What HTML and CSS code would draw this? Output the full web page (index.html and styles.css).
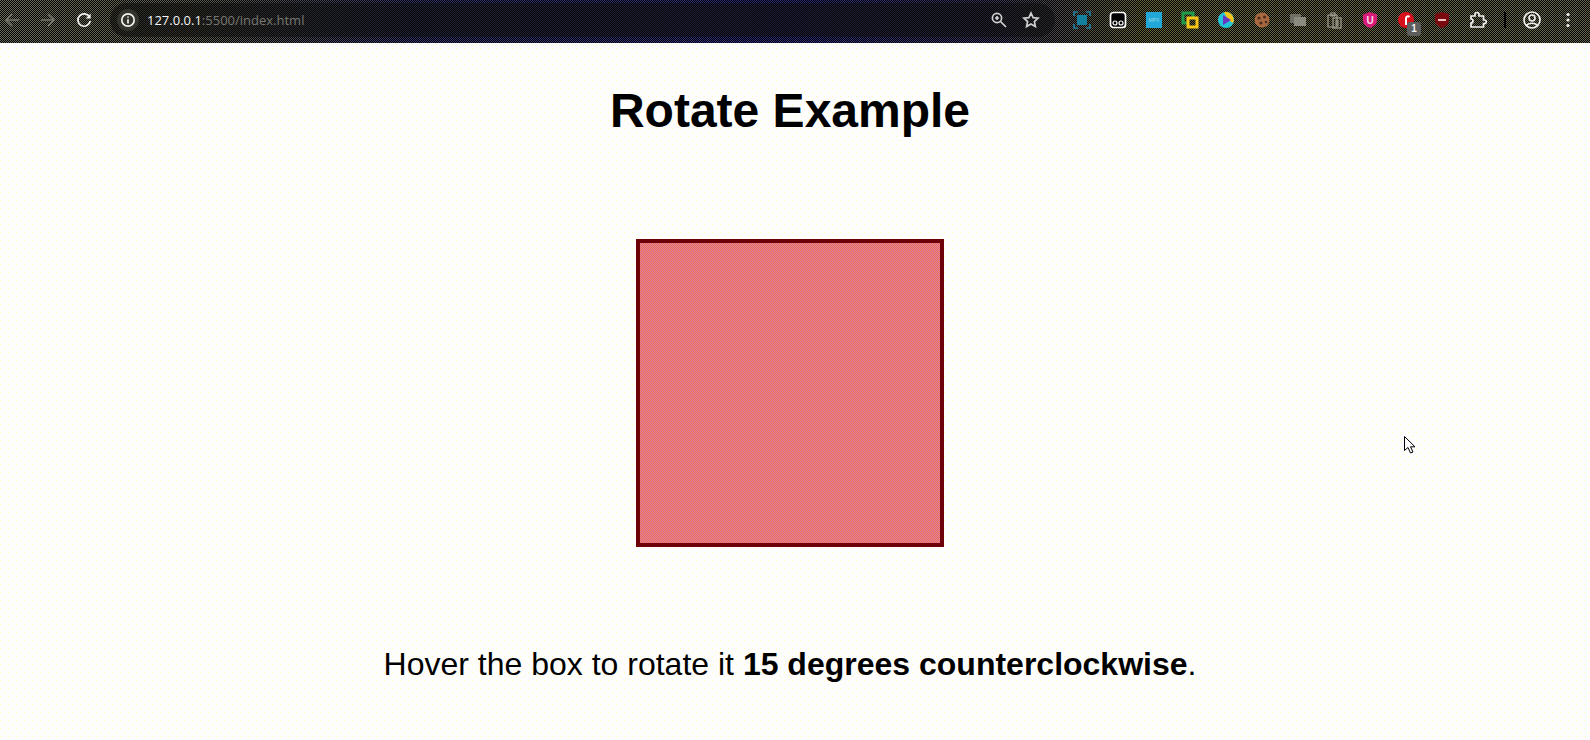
FILE: index.html
```html
<!DOCTYPE html>
<html lang="en">
<head>
	<meta charset="UTF-8">
	<title>Rotate Example</title>
	<link rel="stylesheet" href="styles.css">
</head>
<body>
	<div class="toolbar">
		<div class="nav">
			<span class="cell dim"><svg width="18" height="18" viewBox="0 0 18 18"><path d="M16 9H3M9 3L3 9l6 6"/></svg></span>
			<span class="cell dim"><svg width="18" height="18" viewBox="0 0 18 18"><path d="M2 9h13M9 3l6 6-6 6"/></svg></span>
			<span class="cell"><svg width="18" height="18" viewBox="0 0 18 18"><path d="M14.6 6.2A6.2 6.2 0 1 0 15.2 10"/><path class="solid" d="M15.6 2.4v5h-5z"/></svg></span>
		</div>
		<div class="omnibox">
			<span class="info"><svg width="16" height="16" viewBox="0 0 16 16"><circle cx="8" cy="8" r="6.2"/><path d="M8 7.2v4.2M8 4.4v1.4"/></svg></span>
			<span class="url"><span class="host">127.0.0.1</span>:5500/index.html</span>
			<span class="cell omni-icon"><svg width="18" height="18" viewBox="0 0 18 18"><circle cx="7" cy="7" r="4.6"/><path d="M10.5 10.5l5.5 5.5M5 7h4M7 5v4"/></svg></span>
			<span class="cell omni-icon"><svg width="18" height="18" viewBox="0 0 18 18"><path d="M9 2l2.1 4.6 5 .6-3.7 3.4 1 5L9 13.1l-4.4 2.5 1-5L1.900 7.200l5-.6z"/></svg></span>
		</div>
		<div class="extensions">
			<span class="cell"><svg width="18" height="18" viewBox="0 0 18 18"><path class="teal" d="M1 5V1h4M13 1h4v4M17 13v4h-4M5 17H1v-4"/><rect class="teal-fill" x="4" y="4" width="10" height="10"/></svg></span>
			<span class="cell"><svg width="18" height="18" viewBox="0 0 18 18"><rect class="ghost" x="1.500" y="1.500" width="15" height="15" rx="3"/><circle class="eye" cx="6" cy="12" r="2"/><circle class="eye" cx="12" cy="12" r="2"/></svg></span>
			<span class="cell"><span class="mpx">MPX</span></span>
			<span class="cell"><svg width="18" height="18" viewBox="0 0 18 18"><path class="green" d="M7 12H2V2h10v4"/><path class="yellow" d="M7 7h9v9H7z"/></svg></span>
			<span class="cell"><svg width="18" height="18" viewBox="0 0 18 18"><circle fill="#22c5d8" cx="9" cy="9" r="8"/><path fill="#f5c518" d="M7 1a8 8 0 0 1 9 11l-5-3z"/><path fill="#6a35c0" d="M6 4l8 5-8 5z"/></svg></span>
			<span class="cell"><svg width="18" height="18" viewBox="0 0 18 18"><circle fill="#a8683f" cx="9" cy="9" r="7.500"/><circle fill="#4a2a22" cx="6" cy="7" r="1.600"/><circle fill="#4a2a22" cx="11.500" cy="6" r="1.500"/><circle fill="#4a2a22" cx="8" cy="12" r="1.600"/><circle fill="#4a2a22" cx="13" cy="11" r="1.300"/></svg></span>
			<span class="cell"><svg width="18" height="18" viewBox="0 0 18 18"><rect fill="#6f6f66" x="1" y="3" width="11" height="9"/><rect fill="#8b8b80" x="5" y="6" width="12" height="9"/></svg></span>
			<span class="cell"><svg width="18" height="18" viewBox="0 0 18 18"><path class="muted" d="M3 4h9v12H3zM6 2h4v3H6z"/><rect class="muted" x="8" y="7" width="8" height="10"/><path class="muted" d="M10 10h4M10 12h4M10 14h4"/></svg></span>
			<span class="cell"><svg width="18" height="18" viewBox="0 0 18 18"><path fill="#d81b78" d="M9 1l7 2.500V9c0 4-3 6.500-7 8-4-1.500-7-4-7-8V3.500z"/><text class="shield-u" x="9" y="12.500">U</text></svg></span>
			<span class="cell"><svg width="18" height="18" viewBox="0 0 18 18"><circle fill="#d8101c" cx="9" cy="9" r="8"/><path fill="#fff" d="M8 14V7a3 3 0 0 1 5-2l-1 2a1 1 0 0 0-2 1v6z"/></svg><span class="badge">1</span></span>
			<span class="cell"><svg width="18" height="18" viewBox="0 0 18 18"><path fill="#7a0a10" d="M9 1l7 2v6c0 4-3 6.500-7 8-4-1.500-7-4-7-8V3z"/><rect fill="#f0c0c0" x="5" y="8" width="8" height="2"/></svg></span>
			<span class="cell"><svg width="18" height="18" viewBox="0 0 18 18"><path d="M2 5h4V3.500a2 2 0 0 1 4 0V5h4.500v4h1a1.800 1.800 0 0 1 0 3.600h-1V16H2v-4a2 2 0 0 0 0-4z"/></svg></span>
			<span class="divider"></span>
			<span class="cell"><svg width="20" height="20" viewBox="0 0 20 20"><circle cx="10" cy="10" r="8"/><circle cx="10" cy="8" r="3"/><path d="M4.500 15.500c2-3 9-3 11 0"/></svg></span>
			<span class="cell"><svg width="18" height="18" viewBox="0 0 18 18"><circle class="solid" cx="9" cy="3.500" r="1.600"/><circle class="solid" cx="9" cy="9" r="1.600"/><circle class="solid" cx="9" cy="14.500" r="1.600"/></svg></span>
		</div>
	</div>

	<div class="page">
		<h1>Rotate Example</h1>
		<div class="box"></div>
		<p>Hover the box to rotate it <b>15 degrees counterclockwise</b>.</p>
	</div>

	<svg class="pointer" width="14" height="20" viewBox="0 0 14 20"><path d="M1.500 1.500v14l3.500-3 2.500 5.500 2.500-1-2.500-5.200h4.500z"/></svg>
</body>
</html>
```

FILE: styles.css
```css
* {
	margin: 0;
	padding: 0;
	box-sizing: border-box;
}
html, body {
	height: 100%;
	overflow: hidden;
}
body {
	font-family: "Liberation Sans", Arial, sans-serif;
	color: #000;
	background:
		conic-gradient(at 1px 1px, transparent 75%, #ffffa8 0) 0 0/8px 8px,
		conic-gradient(at 1px 1px, transparent 75%, #ffffa8 0) 4px 4px/8px 8px,
		#fdfdfd;
}

/* browser bar, the source is a dithered gif */
.toolbar {
	display: flex;
	align-items: center;
	height: 43px;
	padding: 0 10px 3px 0;
	background:
		conic-gradient(#000 25%, transparent 0 50%, #000 0 75%, transparent 0) 0 0/2px 2px,
		linear-gradient(90deg, #6a6a58 0, #5c5c48 12%, #343468 26%, #2c2c78 50%, #383458 62%, #64643a 72%, #66664e 100%);
}
.nav {
	display: flex;
	gap: 12px;
}
.cell {
	position: relative;
	display: flex;
	align-items: center;
	justify-content: center;
	width: 24px;
	height: 24px;
	flex: none;
}
.cell svg, .info svg {
	fill: none;
	stroke: #f1f1f1;
	stroke-width: 1.700;
}
.cell .solid {
	fill: #f1f1f1;
	stroke: none;
}
.cell svg [fill] {
	stroke: none;
}
.dim svg {
	stroke: #77776a;
}
.omnibox {
	flex: 1;
	display: flex;
	align-items: center;
	height: 34px;
	margin: 0 15px 0 14px;
	padding: 0 4px 0 7px;
	border-radius: 17px;
	background: rgba(16, 16, 18, 0.62);
}
.info {
	display: flex;
	align-items: center;
	justify-content: center;
	width: 22px;
	height: 22px;
	border-radius: 50%;
	background: #34342e;
}
.url {
	flex: 1;
	margin-left: 8px;
	font: 13px "Open Sans", "Noto Sans", sans-serif;
	color: #77776f;
}
.host {
	color: #f4f4f4;
}
.omni-icon {
	margin-right: 8px;
}
.omni-icon svg {
	stroke: #d0d0d0;
}
.extensions {
	display: flex;
	align-items: center;
	gap: 12px;
}
.teal {
	stroke: #1c7d9a;
}
.teal-fill {
	fill: #12809c;
	stroke: none;
}
.ghost {
	fill: #000;
	stroke: #fff;
}
.eye {
	fill: #000;
	stroke: #fff;
	stroke-width: 1.200;
}
.mpx {
	width: 16px;
	height: 16px;
	font-size: 5px;
	line-height: 16px;
	text-align: center;
	color: #9ad8e8;
	background: #1fa8d8;
}
.green {
	stroke: #1f9a4a;
	stroke-width: 3;
}
.yellow {
	stroke: #f5c518;
	stroke-width: 3;
}
.cell .muted {
	stroke: #a0a094;
	stroke-width: 1.200;
}
.shield-u {
	font-size: 10px;
	font-weight: bold;
	text-anchor: middle;
	fill: #f8d8e8;
	stroke: none;
}
.badge {
	position: absolute;
	right: -3px;
	bottom: -4px;
	width: 14px;
	height: 14px;
	border-radius: 3px;
	font-size: 10px;
	font-weight: bold;
	line-height: 14px;
	text-align: center;
	color: #eee;
	background: #5d5d5d;
}
.divider {
	width: 2px;
	height: 16px;
	margin: 0 2px;
	background: #000;
}

/* page */
.page {
	display: flex;
	flex-direction: column;
	align-items: center;
	width: 1580px;
	padding-top: 40px;
}
h1 {
	font-size: 48px;
	line-height: 55px;
}
.box {
	width: 308px;
	height: 308px;
	margin: 101px 0 99px;
	border: 4px solid #6e0008;
	background: conic-gradient(#ee8248 25%, #dc6cac 0 50%, #ee8248 0 75%, #dc6cac 0) 0 0/2px 2px;
}
p {
	font-size: 32px;
	line-height: 37px;
}

/* mouse pointer sits over the page */
.pointer {
	position: absolute;
	left: 1403px;
	top: 435px;
	fill: #fff;
	stroke: #000;
	stroke-width: 1;
}
```
